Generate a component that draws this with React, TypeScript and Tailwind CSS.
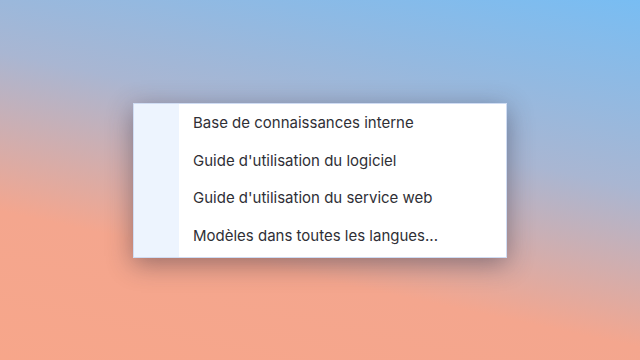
const items = [
  'Base de connaissances interne',
  "Guide d'utilisation du logiciel",
  "Guide d'utilisation du service web",
  'Modèles dans toutes les langues...',
];

export default function App() {
  return (
    <div
      className="w-[640px] h-[360px] flex items-center justify-center bg-[linear-gradient(12deg,#f7a68a_0%,#f4a68e_30%,#a9b6d2_62%,#78bdf3_100%)]"
      style={{ fontFamily: 'Inter, "Noto Sans", sans-serif' }}
    >
      <div className="flex w-[374px] h-[155px] bg-white border border-[#cfdcf3] shadow-[0_6px_24px_rgba(40,40,60,0.45)]">
        <div className="w-[45px] bg-[#edf4fe]" />
        <ul className="flex flex-col pl-[14px] pt-0">
          {items.map((item) => (
            <li key={item} className="h-[37.7px] flex items-center text-[15px] text-[#2f2f36] leading-none">
              {item}
            </li>
          ))}
        </ul>
      </div>
    </div>
  );
}
